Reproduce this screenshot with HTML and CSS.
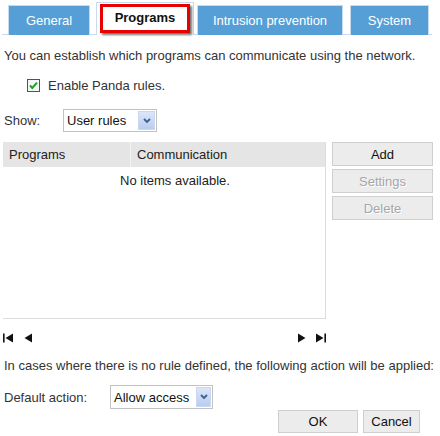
FILE: index.html
```html
<!DOCTYPE html>
<html>
<head>
<meta charset="utf-8">
<link rel="stylesheet" href="styles.css">
</head>
<body>
<div class="page">
  <div class="tabs">
    <div class="tab tab-general">General</div>
    <div class="tab tab-active"><span class="highlight">Programs</span></div>
    <div class="tab tab-intrusion">Intrusion prevention</div>
    <div class="tab tab-system">System</div>
  </div>

  <p class="intro">You can establish which programs can communicate using the network.</p>

  <label class="check-row">
    <svg class="checkbox" width="13" height="13" viewBox="0 0 13 13">
      <rect x="0.5" y="0.5" width="12" height="12" fill="#f4f6f8" stroke="#2b5d8c"/>
      <path d="M3 6.5 L5.3 9 L10 3.6" fill="none" stroke="#23a023" stroke-width="2"/>
    </svg>
    <span>Enable Panda rules.</span>
  </label>

  <div class="show-row">
    <span class="show-label">Show:</span>
    <div class="select select-show">
      <span class="select-text">User rules</span>
      <span class="select-btn">
        <svg width="8" height="6" viewBox="0 0 8 6"><path d="M1 1 L4 4 L7 1" fill="none" stroke="#3f5f8f" stroke-width="1.8"/></svg>
      </span>
    </div>
  </div>

  <div class="rules">
    <div class="grid">
      <div class="grid-head">
        <div class="col col-programs">Programs</div>
        <div class="col col-comm">Communication</div>
      </div>
      <div class="grid-empty">No items available.</div>
    </div>
    <div class="side-buttons">
      <div class="btn btn-side">Add</div>
      <div class="btn btn-side disabled">Settings</div>
      <div class="btn btn-side disabled">Delete</div>
    </div>
  </div>

  <div class="pager">
    <div class="pager-left">
      <svg width="10" height="10" viewBox="0 0 10 10"><rect x="0" y="0.5" width="1.6" height="9" fill="#111"/><path d="M10 0.5 L2.5 5 L10 9.5 Z" fill="#111"/></svg>
      <svg width="8" height="10" viewBox="0 0 8 10"><path d="M8 0.5 L0.5 5 L8 9.5 Z" fill="#111"/></svg>
    </div>
    <div class="pager-right">
      <svg width="8" height="10" viewBox="0 0 8 10"><path d="M0 0.5 L7.5 5 L0 9.5 Z" fill="#111"/></svg>
      <svg width="10" height="10" viewBox="0 0 10 10"><path d="M0 0.5 L7.5 5 L0 9.5 Z" fill="#111"/><rect x="8.4" y="0.5" width="1.6" height="9" fill="#111"/></svg>
    </div>
  </div>

  <p class="note">In cases where there is no rule defined, the following action will be applied:</p>

  <div class="action-row">
    <span class="action-label">Default action:</span>
    <div class="select select-action">
      <span class="select-text">Allow access</span>
      <span class="select-btn">
        <svg width="8" height="6" viewBox="0 0 8 6"><path d="M1 1 L4 4 L7 1" fill="none" stroke="#3f5f8f" stroke-width="1.8"/></svg>
      </span>
    </div>
  </div>

  <div class="footer">
    <div class="btn btn-ok">OK</div>
    <div class="btn btn-cancel">Cancel</div>
  </div>
</div>
</body>
</html>
```

FILE: styles.css
```css
* { box-sizing: border-box; }
html, body { margin: 0; padding: 0; background: #fff; }
body {
  font-family: "Liberation Sans", Arial, sans-serif;
  font-size: 13px;
  color: #333;
  width: 440px;
  height: 436px;
  overflow: hidden;
}
.page { padding: 0 0 0 4px; }
p { margin: 0; }

.tabs {
  display: flex;
  align-items: flex-end;
  height: 35px;
  margin-left: -2px;
  margin-right: 8px;
  padding-left: 6px;
  border-bottom: 1px solid #c8dbee;
}
.tab {
  height: 30px;
  margin-bottom: -1px;
  background: #559fd6;
  border: 1px solid #c8dbee;
  border-bottom: none;
  color: #fff;
  display: flex;
  align-items: center;
  justify-content: center;
  padding-bottom: 1px;
}
.tab-general { width: 82px; }
.tab-active {
  width: 98px;
  height: 33px;
  margin-left: 6px;
  background: #fff;
  border-color: #c8dbee;
  padding: 1px 3px 2px 3px;
  align-items: stretch;
}
.highlight {
  flex: 1;
  display: flex;
  align-items: center;
  justify-content: center;
  border: 3px solid #e60000;
  box-shadow: 2px 2px 2px rgba(0,0,0,0.55);
  font-weight: bold;
  color: #111;
  padding-bottom: 2px;
}
.tab-intrusion { width: 146px; margin-left: 3px; }
.tab-system { width: 79px; margin-left: 7px; }

.intro { margin-top: 13px; line-height: 16px; }

.check-row {
  display: flex;
  align-items: center;
  height: 16px;
  margin-top: 13px;
  padding-left: 23px;
}
.checkbox { display: block; margin-right: 8px; }

.show-row {
  display: flex;
  align-items: center;
  margin-top: 16px;
  height: 23px;
}
.show-label { width: 59px; }

.select {
  display: flex;
  align-items: center;
  justify-content: space-between;
  border: 1px solid #c2c2c2;
  background: #fff;
  padding: 1px 1px 1px 3px;
  color: #111;
}
.select-show { width: 94px; height: 23px; }
.select-action { width: 103px; height: 24px; }
.select-btn {
  width: 17px;
  align-self: stretch;
  display: flex;
  align-items: center;
  justify-content: center;
  background: linear-gradient(#dbe6f8, #b9cdf0);
  border: 1px solid #c9d8f0;
}
.select-action .select-btn { width: 15px; }

.rules {
  display: flex;
  margin-top: 10px;
  height: 177px;
}
.grid {
  width: 323px;
  margin-left: -1px;
  border-right: 1px solid #dcdcdc;
  border-bottom: 1px solid #dcdcdc;
}
.grid-head {
  display: flex;
  height: 25px;
  background: #e5e5e5;
  color: #222;
}
.col { display: flex; align-items: center; }
.col-programs { width: 127px; padding-left: 6px; }
.col-comm { flex: 1; padding-left: 6px; border-left: 1px solid #f3f3f3; }
.grid-empty {
  margin-top: 6px;
  line-height: 16px;
  text-align: center;
  padding-left: 22px;
  color: #222;
}

.side-buttons {
  display: flex;
  flex-direction: column;
  gap: 3px;
  margin-left: 6px;
}
.btn {
  display: flex;
  align-items: center;
  justify-content: center;
  background: #ececec;
  border: 1px solid #cfcfcf;
  color: #111;
}
.btn-side { width: 101px; height: 24px; }
.btn.disabled { color: #a6a6a6; text-shadow: 1px 1px 0 #fff; }

.pager {
  display: flex;
  justify-content: space-between;
  align-items: center;
  margin-top: 14px;
  height: 10px;
  width: 324px;
  margin-left: -1px;
}
.pager-left, .pager-right { display: flex; align-items: center; }
.pager svg { display: block; }
.pager-left svg + svg { margin-left: 11px; }
.pager-right svg + svg { margin-left: 10px; }
.pager-right { margin-right: 1px; }

.note { margin-top: 15px; line-height: 16px; }

.action-row {
  display: flex;
  align-items: center;
  margin-top: 11px;
  height: 24px;
}
.action-label { width: 106px; }

.footer {
  display: flex;
  justify-content: flex-end;
  gap: 5px;
  margin-top: 1px;
  padding-right: 20px;
}
.btn-ok { width: 80px; height: 23px; }
.btn-cancel { width: 57px; height: 23px; }
```
